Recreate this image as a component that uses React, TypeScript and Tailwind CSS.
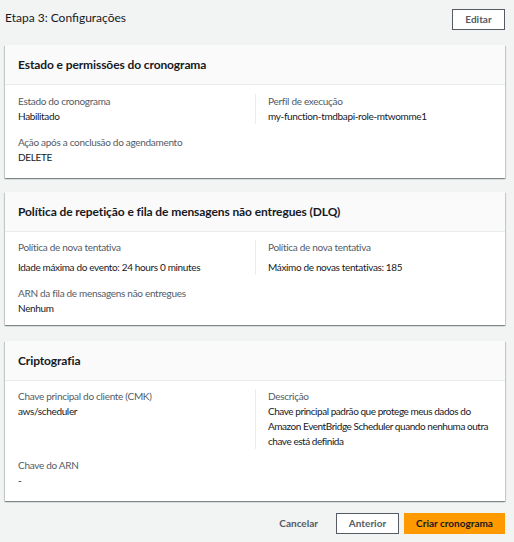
import React from "react";

const font = { fontFamily: "Lato, 'Noto Sans', sans-serif" };

function Label({ children }: { children: React.ReactNode }) {
  return <div className="text-[10px] leading-[15px] tracking-[-0.3px] text-[#545b64]">{children}</div>;
}
function Value({ children, className = "" }: { children: React.ReactNode; className?: string }) {
  return <div className={"text-[10px] leading-[15px] tracking-[-0.35px] text-[#16191f] " + className}>{children}</div>;
}

function Card({ title, children }: { title: string; children: React.ReactNode }) {
  return (
    <div className="bg-white shadow-[0_1px_1px_0_rgba(0,28,36,0.3),1px_1px_1px_0_rgba(0,28,36,0.15),-1px_1px_1px_0_rgba(0,28,36,0.15)]">
      <div className="h-[40px] flex items-center px-[13px] bg-[#fafafa] border-b border-[#eaeded]">
        <h2 className="text-[12px] font-bold tracking-[-0.1px] text-[#16191f]">{title}</h2>
      </div>
      {children}
    </div>
  );
}

export default function App() {
  return (
    <div className="w-[514px] h-[542px] bg-[#f2f3f3] pl-[5px] pr-[9px]" style={font}>
      <div className="flex items-center justify-between pt-[9px] h-[30px]">
        <div className="text-[12px] text-[#16191f] leading-[20px] -mt-[3px]">Etapa 3: Configurações</div>
        <button className="w-[53px] h-[21px] border border-[#545b64] bg-white text-[10px] font-bold text-[#545b64]">
          Editar
        </button>
      </div>

      <div className="mt-[15px]">
        <Card title="Estado e permissões do cronograma">
          <div className="px-[13px] pt-[9px] pb-[13px]">
            <div className="grid grid-cols-2">
              <div>
                <Label>Estado do cronograma</Label>
                <Value>Habilitado</Value>
              </div>
              <div className="border-l border-[#eaeded] pl-[12px]">
                <Label>Perfil de execução</Label>
                <Value>my-function-tmdbapi-role-mtwomme1</Value>
              </div>
            </div>
            <div className="mt-[11px]">
              <Label>Ação após a conclusão do agendamento</Label>
              <Value>DELETE</Value>
            </div>
          </div>
        </Card>
      </div>

      <div className="mt-[14px]">
        <Card title="Política de repetição e fila de mensagens não entregues (DLQ)">
          <div className="px-[13px] pt-[8px] pb-[9px]">
            <div className="grid grid-cols-2">
              <div>
                <Label>Política de nova tentativa</Label>
                <Value className="mt-[5px]">Idade máxima do evento: 24 hours 0 minutes</Value>
              </div>
              <div className="border-l border-[#eaeded] pl-[12px]">
                <Label>Política de nova tentativa</Label>
                <Value className="mt-[5px]">Máximo de novas tentativas: 185</Value>
              </div>
            </div>
            <div className="mt-[11px]">
              <Label>ARN da fila de mensagens não entregues</Label>
              <Value>Nenhum</Value>
            </div>
          </div>
        </Card>
      </div>

      <div className="mt-[16px]">
        <Card title="Criptografia">
          <div className="px-[13px] pt-[8px] pb-[13px]">
            <div className="grid grid-cols-2">
              <div>
                <Label>Chave principal do cliente (CMK)</Label>
                <Value>aws/scheduler</Value>
              </div>
              <div className="border-l border-[#eaeded] pl-[12px]">
                <Label>Descrição</Label>
                <Value className="tracking-[-0.45px]">
                  Chave principal padrão que protege meus dados do Amazon EventBridge Scheduler quando nenhuma outra chave está definida
                </Value>
              </div>
            </div>
            <div className="mt-[9px]">
              <Label>Chave do ARN</Label>
              <Value>-</Value>
            </div>
          </div>
        </Card>
      </div>

      <div className="flex items-center justify-end mt-[12px] gap-[5px]">
        <button className="h-[21px] px-[13px] text-[10px] font-bold text-[#545b64]">Cancelar</button>
        <button className="w-[63px] h-[21px] border border-[#545b64] bg-white text-[10px] font-bold text-[#545b64]">
          Anterior
        </button>
        <button className="w-[101px] h-[21px] bg-[#ff9900] text-[10px] font-bold text-[#16191f]">
          Criar cronograma
        </button>
      </div>
    </div>
  );
}
